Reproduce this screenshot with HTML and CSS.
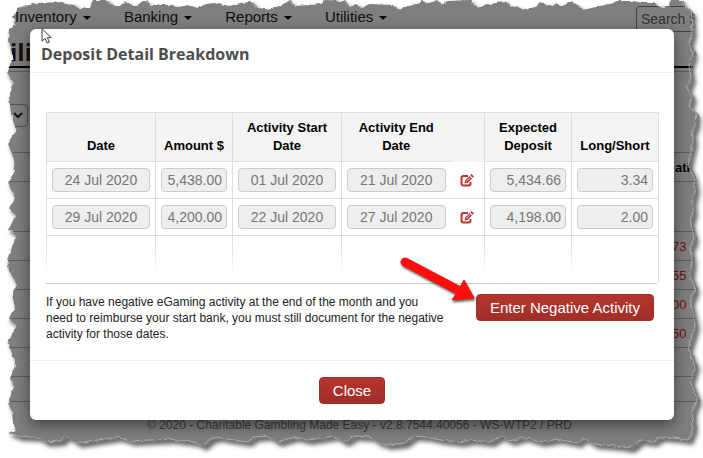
FILE: index.html
```html
<!DOCTYPE html>
<html lang="en">
<head>
	<meta charset="utf-8">
	<title>Deposit Detail Breakdown</title>
	<link rel="stylesheet" href="styles.css">
</head>
<body>
	<div class="page">
		<nav class="navbar">
			<a href="#">Inventory <span class="caret"></span></a>
			<a href="#">Banking <span class="caret"></span></a>
			<a href="#">Reports <span class="caret"></span></a>
			<a href="#">Utilities <span class="caret"></span></a>
			<input class="search" type="text" placeholder="Search S" aria-label="Search">
		</nav>

		<h1 class="page-title">ili</h1>

		<div class="filter">
			<select aria-label="Filter"><option></option></select>
			<svg class="chevron" width="10" height="7" viewBox="0 0 10 7"><path d="M1 1l4 4 4-4" fill="none" stroke="#222" stroke-width="2"/></svg>
		</div>

		<table class="ledger">
			<thead>
				<tr><th></th><th class="last">atio</th></tr>
			</thead>
			<tbody>
				<tr class="tall"><td></td><td></td></tr>
				<tr><td></td><td>73</td></tr>
				<tr><td></td><td>55</td></tr>
				<tr><td></td><td>00</td></tr>
				<tr><td></td><td>50</td></tr>
				<tr><td></td><td></td></tr>
				<tr class="short"><td></td><td></td></tr>
			</tbody>
		</table>

		<footer class="page-footer">© 2020 - Charitable Gambling Made Easy - v2.8.7544.40056 - WS-WTP2 / PRD</footer>

		<div class="backdrop"></div>

		<div class="modal" role="dialog" aria-labelledby="modalTitle">
			<div class="modal-header">
				<h2 id="modalTitle">Deposit Detail Breakdown</h2>
			</div>

			<div class="modal-body">
				<div class="table-wrap">
					<table class="deposits">
						<colgroup>
							<col class="col-date"><col class="col-amount"><col class="col-date"><col class="col-date">
							<col class="col-edit"><col class="col-total"><col class="col-total">
						</colgroup>
						<thead>
							<tr>
								<th>Date</th>
								<th>Amount $</th>
								<th>Activity Start Date</th>
								<th>Activity End Date</th>
								<th class="edit"></th>
								<th>Expected Deposit</th>
								<th>Long/Short</th>
							</tr>
						</thead>
						<tbody>
							<tr>
								<td><input type="text" value="24 Jul 2020" aria-label="Date" disabled></td>
								<td><input class="money" type="text" value="5,438.00" aria-label="Amount" disabled></td>
								<td><input type="text" value="01 Jul 2020" aria-label="Activity start date" disabled></td>
								<td><input type="text" value="21 Jul 2020" aria-label="Activity end date" disabled></td>
								<td class="edit">
									<a href="#" aria-label="Edit"><svg width="14" height="13" viewBox="0 0 14 13"><path d="M8 2H3.500Q1.500 2 1.500 4v5.500q0 2 2 2h5q2 0 2-2V8" fill="none" stroke="#c0322c" stroke-width="2"/><path d="M4.500 9.500l.6-3L9.500 2l2.400 2.400L7.500 9zM10.200 1.300L11.500 0 14 2.500l-1.300 1.200z" fill="#c0322c"/><path d="M6 7.600l4-4" stroke="#fff" stroke-width=".8"/></svg></a>
								</td>
								<td><input class="money" type="text" value="5,434.66" aria-label="Expected deposit" disabled></td>
								<td><input class="money" type="text" value="3.34" aria-label="Long/Short" disabled></td>
							</tr>
							<tr>
								<td><input type="text" value="29 Jul 2020" aria-label="Date" disabled></td>
								<td><input class="money" type="text" value="4,200.00" aria-label="Amount" disabled></td>
								<td><input type="text" value="22 Jul 2020" aria-label="Activity start date" disabled></td>
								<td><input type="text" value="27 Jul 2020" aria-label="Activity end date" disabled></td>
								<td class="edit">
									<a href="#" aria-label="Edit"><svg width="14" height="13" viewBox="0 0 14 13"><path d="M8 2H3.500Q1.500 2 1.500 4v5.500q0 2 2 2h5q2 0 2-2V8" fill="none" stroke="#c0322c" stroke-width="2"/><path d="M4.500 9.500l.6-3L9.500 2l2.400 2.400L7.500 9zM10.200 1.300L11.500 0 14 2.500l-1.300 1.200z" fill="#c0322c"/><path d="M6 7.600l4-4" stroke="#fff" stroke-width=".8"/></svg></a>
								</td>
								<td><input class="money" type="text" value="4,198.00" aria-label="Expected deposit" disabled></td>
								<td><input class="money" type="text" value="2.00" aria-label="Long/Short" disabled></td>
							</tr>
							<tr class="filler">
								<td></td><td></td><td></td><td></td><td class="edit"></td><td></td><td></td>
							</tr>
						</tbody>
					</table>
				</div>

				<div class="notice">
					<p>If you have negative eGaming activity at the end of the month and you need to reimburse your start bank, you must still document for the negative activity for those dates.</p>
					<div class="callout">
						<button class="btn" type="button">Enter Negative Activity</button>
						<svg class="arrow" width="84" height="56" viewBox="0 0 84 56">
							<path d="M9 10L62 38" stroke="#fe0d0d" stroke-width="9" stroke-linecap="round"/>
							<path d="M68 28L78 46 56 48 60 42z" fill="#fe0d0d" stroke="#fe0d0d" stroke-linejoin="round"/>
						</svg>
					</div>
				</div>
			</div>

			<div class="modal-footer">
				<button class="btn" type="button">Close</button>
			</div>

			<svg class="cursor" width="12" height="17" viewBox="0 0 12 17"><path d="M1 .8v12.400l3-2.800 2.200 4.600 2.200-1-2.100-4.400h3.900z" fill="#fff" stroke="#3a3a4a"/></svg>
		</div>

		<!-- torn paper edge round the whole page -->
		<svg class="torn" viewBox="0 0 703 458" preserveAspectRatio="none" aria-hidden="true">
			<defs>
				<path id="paper" d="M18 8L37 3 63 2 65 4 75 5 78 8 90 8 93 0 108 0 113 6 120 6 125 1 130 5 137 6 142 1 147 1 150 5 173 5 177 8 187 5 197 8 203 5 213 3 230 6 240 3 253 2 258 8 267 9 280 6 290 0 295 6 320 4 325 0 345 1 350 7 356 4 363 8 368 4 393 5 398 9 413 5 423 1 430 3 437 1 442 5 448 1 471 0 478 8 488 4 505 2 511 6 525 9 535 7 540 3 553 6 556 3 561 7 570 2 578 5 584 10 595 7 610 4 620 1 633 1 643 3 653 3 663 7 668 6 671 0 683 0 686 7 691 10 695 15 694 20 695 33 692 45 696 55 692 68 694 80 690 90 695 98 692 108 699 115 698 127 695 133 696 143 693 157 691 167 696 177 698 190 695 203 696 213 693 223 697 240 693 250 695 263 693 277 698 290 693 303 696 317 698 327 691 350 698 367 693 383 700 400 695 413 696 430 691 442 676 440 663 439 655 444 643 442 633 450 620 448 596 446 586 440 580 445 560 441 543 444 526 439 513 443 503 438 493 444 473 442 463 444 443 442 430 439 417 438 407 445 390 447 380 444 373 439 357 438 347 444 337 438 310 442 297 439 280 444 270 438 257 439 250 444 230 441 220 439 213 441 205 448 197 444 173 441 133 443 120 439 80 445 69 438 63 443 48 444 40 439 20 438 8 433 15 430 13 413 8 403 14 387 10 378 16 366 12 353 8 342 17 325 8 319 15 307 12 293 17 285 9 270 7 260 12 247 17 235 8 230 16 215 9 208 15 198 8 183 14 172 13 157 8 143 16 130 11 113 9 97 13 83 7 72 13 57 8 40 9 30 16 25 13 17z"/>
				<filter id="rough" x="-5%" y="-5%" width="110%" height="110%">
					<feTurbulence type="fractalNoise" baseFrequency=".18" numOctaves="2" seed="4"/>
					<feDisplacementMap in="SourceGraphic" scale="4" xChannelSelector="R" yChannelSelector="G"/>
				</filter>
				<filter id="soft"><feGaussianBlur stdDeviation="2"/></filter>
				<mask id="outside" maskUnits="userSpaceOnUse" x="0" y="0" width="703" height="458">
					<rect width="703" height="458" fill="#fff"/>
					<use href="#paper" filter="url(#rough)"/>
				</mask>
			</defs>
			<g filter="url(#rough)" fill="none">
				<use href="#paper" x="-1" y="-1" stroke="#777"/>
				<use href="#paper" x="-3" y="-2" stroke="#aaa"/>
			</g>
			<g mask="url(#outside)">
				<rect width="703" height="458" fill="#fff"/>
				<use href="#paper" x="2" y="3" fill="#666" filter="url(#soft)"/>
			</g>
		</svg>
	</div>
</body>
</html>
```

FILE: styles.css
```css
* {
	box-sizing: border-box;
}
body {
	margin: 0;
	background-color: #fff;
	color: #000;
	font-family: "Liberation Sans", Arial, sans-serif;
	font-size: 14px;
}
.page {
	position: relative;
	min-height: 100vh;
	overflow: hidden;
}

/* page behind the dialog */
.navbar {
	display: flex;
	align-items: center;
	gap: 33px;
	height: 33px;
	padding-left: 15px;
}
.navbar a {
	color: #222;
	font-size: 15px;
	text-decoration: none;
	white-space: nowrap;
}
.caret {
	display: inline-block;
	margin-left: 2px;
	border: 4px solid transparent;
	border-top-color: #000;
	border-bottom: 0;
	vertical-align: middle;
}
.search {
	width: 67px;
	height: 26px;
	margin: 4px 0 0 auto;
	padding: 0 4px;
	border: 1px solid #888;
	border-radius: 4px 0 0 4px;
	background: transparent;
	font: inherit;
}
.search::placeholder {
	color: #666;
}
.page-title {
	height: 35px;
	margin: 0 0 3px;
	padding-left: 10px;
	border-bottom: 2px solid #000;
	color: #222;
	font: bold 24px/38px "Open Sans", sans-serif;
}
.filter {
	position: relative;
	height: 81px;
	padding-top: 32px;
	border-top: 1px solid #bbb;
}
.filter select {
	width: 28px;
	height: 23px;
	border: 1px solid #aaa;
	border-radius: 4px;
	background: transparent;
	appearance: none;
}
.chevron {
	position: absolute;
	left: 13px;
	top: 40px;
}
.ledger {
	width: 100%;
	border-collapse: collapse;
	table-layout: fixed;
	font-size: 13px;
}
.ledger th,
.ledger td {
	height: 29px;
	padding: 0 17px 0 0;
	border: 1px solid #bbb;
	border-width: 1px 0;
	color: #e22;
	text-align: right;
	white-space: nowrap;
}
.ledger .last {
	width: 31px;
	padding: 0 0 0 3px;
	color: #000;
	text-align: left;
}
.ledger .tall td {
	height: 50px;
}
.ledger .short td {
	height: 25px;
}
.page-footer {
	padding: 14px 0 20px 16px;
	color: #777;
	font-size: 12px;
	line-height: 18px;
	text-align: center;
}
.backdrop {
	position: absolute;
	inset: 0;
	background-color: rgba(0, 0, 0, .5);
}

/* dialog */
.modal {
	position: absolute;
	top: 29px;
	left: 30px;
	right: 29px;
	border-radius: 6px;
	background-color: #fff;
	box-shadow: 0 5px 15px rgba(0, 0, 0, .5);
}
.modal-header {
	padding: 13px 11px 6px;
	border-bottom: 1px solid #eee;
}
.modal-header h2 {
	margin: 0;
	color: #4d4d4d;
	font: bold 16px/24px "Open Sans", sans-serif;
}
.modal-body {
	padding: 39px 17px 18px 16px;
}
.table-wrap {
	position: relative;
	border-bottom: 1px solid #ccc;
}
/* fades the empty rows out towards the bottom of the table */
.table-wrap::after {
	content: "";
	position: absolute;
	left: 0;
	right: 0;
	bottom: 0;
	height: 44px;
	background: linear-gradient(rgba(255, 255, 255, 0), #fff 90%);
	pointer-events: none;
}
.deposits {
	width: 100%;
	border-collapse: collapse;
	table-layout: fixed;
}
.col-date {
	width: 109px;
}
.col-amount {
	width: 77px;
}
.col-edit {
	width: 34px;
}
.col-total {
	width: 87px;
}
.deposits th {
	height: 48px;
	padding: 6px;
	border: 1px solid #ddd;
	background-color: #f4f4f4;
	font-size: 13px;
	line-height: 18px;
	vertical-align: bottom;
}
.deposits th:last-child {
	padding: 6px 0;
}
.deposits th.edit {
	border-bottom-color: #f4f4f4;
}
.deposits td {
	height: 37px;
	padding: 0 5px;
	border: 1px solid #ddd;
}
.deposits .edit {
	border-left: hidden;
	text-align: center;
}
.deposits .edit svg {
	display: block;
	margin: 0 auto;
}
.deposits input {
	display: block;
	width: 100%;
	height: 24px;
	padding: 0;
	border: 1px solid #ccc;
	border-radius: 4px;
	background-color: #eee;
	color: #777;
	font: inherit;
	text-align: center;
}
.deposits .money {
	padding-right: 4px;
	text-align: right;
}
.deposits .filler td {
	height: 47px;
	border-bottom: 0;
}
.notice {
	display: flex;
	align-items: flex-start;
	justify-content: space-between;
	padding: 10px 3px 0 0;
}
.notice p {
	max-width: 400px;
	margin: 0;
	color: #222;
	font-size: 12px;
	line-height: 16px;
}
.callout {
	position: relative;
}
.btn {
	height: 27px;
	padding: 0 13px;
	border: 1px solid #a5302a;
	border-radius: 4px;
	background: linear-gradient(#b5342d, #a02f28);
	color: #fff;
	font: 15px "Liberation Sans", Arial, sans-serif;
	white-space: nowrap;
}
.arrow {
	position: absolute;
	right: 100%;
	top: -42px;
	margin-right: -4px;
	filter: drop-shadow(1px 2px 1px rgba(0, 0, 0, .6));
}
.modal-footer {
	padding: 16px;
	border-top: 1px solid #eee;
	text-align: center;
}
.cursor {
	position: absolute;
	top: -1px;
	left: 11px;
}
.torn {
	position: absolute;
	inset: 0;
	width: 100%;
	height: 100%;
	pointer-events: none;
}
```
